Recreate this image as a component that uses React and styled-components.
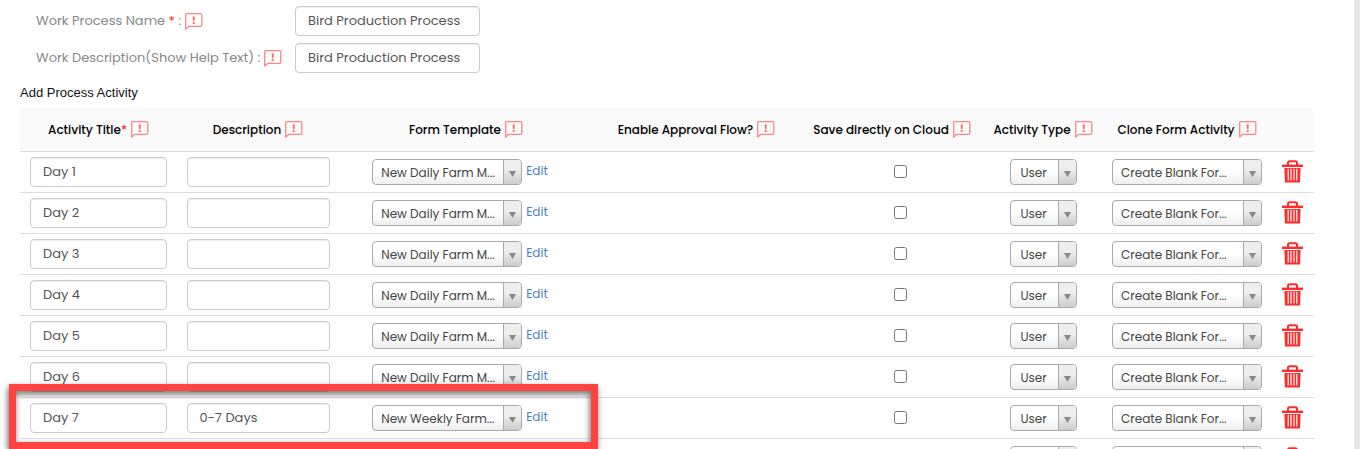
import React, { useState } from "react";
import styled, { createGlobalStyle } from "styled-components";

const columns = [
  { id: "title", label: "Activity Title", required: true, width: 157 },
  { id: "description", label: "Description", width: 162 },
  { id: "template", label: "Form Template", width: 254 },
  { id: "approval", label: "Enable Approval Flow?", width: 207 },
  { id: "cloud", label: "Save directly on Cloud", width: 184 },
  { id: "type", label: "Activity Type", width: 118 },
  { id: "clone", label: "Clone Form Activity", width: 170 },
];

const daily = "New Daily Farm M...";

const activities = [
  { title: "Day 1", description: "", template: daily },
  { title: "Day 2", description: "", template: daily },
  { title: "Day 3", description: "", template: daily },
  { title: "Day 4", description: "", template: daily },
  { title: "Day 5", description: "", template: daily },
  { title: "Day 6", description: "", template: daily },
  {
    title: "Day 7",
    description: "0-7 Days",
    template: "New Weekly Farm...",
    highlighted: true,
  },
  { title: "Day 8", description: "", template: daily },
];

function HelpIcon() {
  return (
    <HelpSvg viewBox="0 0 18 17" aria-hidden="true">
      <path
        d="M0.7 16V1.7Q0.7 0.7 1.7 0.7H15.8Q16.8 0.7 16.8 1.7V12.3Q16.8 13.3 15.8 13.3H4L0.7 16Z"
        fill="none"
        stroke="#ff8585"
        strokeWidth="1.3"
        strokeLinejoin="round"
      />
      <path d="M7.6 3.4h2.2l-0.4 4.8h-1.4z M7.7 9.2h2v1.8h-2z" fill="#ff6666" />
    </HelpSvg>
  );
}

function TrashIcon() {
  return (
    <TrashSvg viewBox="0 0 22 24" aria-hidden="true">
      <path
        d="M6 5V2.8Q6 1.2 7.6 1.2H13.4Q15 1.2 15 2.8V5"
        fill="none"
        stroke="#ff2b2b"
        strokeWidth="2"
      />
      <path d="M0 4.6h21v2.4H0z" fill="#ff2b2b" />
      <path
        fillRule="evenodd"
        d="M2.4 8H18.6L18 22.5H3z M5.6 8.8v11.6h1.2v-11.6z M8.4 8.8v11.6h1.2v-11.6z M11.4 8.8v11.6h1.2v-11.6z M14.2 8.8v11.6h1.2v-11.6z"
        fill="#ff2b2b"
      />
    </TrashSvg>
  );
}

function Dropdown({ label, value, width, indent = 8 }) {
  return (
    <SelectBox $width={width}>
      <Select aria-label={label} defaultValue={value} $indent={indent}>
        <option>{value}</option>
      </Select>
      <SelectArrow>
        <svg width="7" height="6" viewBox="0 0 7 6" aria-hidden="true">
          <path d="M0 0h7L3.5 6z" fill="#888" />
        </svg>
      </SelectArrow>
    </SelectBox>
  );
}

function ActivityRow({ activity }) {
  const [cloud, setCloud] = useState(false);

  return (
    <Row $raised={activity.highlighted}>
      <Cell>
        <TextInput aria-label="Activity Title" $width={137} defaultValue={activity.title} />
        {activity.highlighted && <Highlight />}
      </Cell>
      <Cell>
        <TextInput aria-label="Description" $width={143} defaultValue={activity.description} />
      </Cell>
      <Cell>
        <TemplateSec>
          <Dropdown label="Form Template" value={activity.template} width={150} />
          <EditLink href="#">Edit</EditLink>
        </TemplateSec>
      </Cell>
      <Cell />
      <Cell>
        <CheckboxSec>
          <Checkbox
            type="checkbox"
            aria-label="Save directly on Cloud"
            checked={cloud}
            onChange={(e) => setCloud(e.target.checked)}
          />
        </CheckboxSec>
      </Cell>
      <Cell>
        <Dropdown label="Activity Type" value="User" width={67} indent={10} />
      </Cell>
      <Cell>
        <Dropdown label="Clone Form Activity" value="Create Blank For..." width={150} />
      </Cell>
      <Cell>
        <DeleteBtn type="button" aria-label="Delete">
          <TrashIcon />
        </DeleteBtn>
      </Cell>
    </Row>
  );
}

export default function App() {
  return (
    <Page>
      <GlobalStyle />
      <Main>
        <Form>
          <Field>
            <Label htmlFor="processName">
              <span>
                Work Process Name <Required>*</Required> :
              </span>
              <HelpIcon />
            </Label>
            <TextInput id="processName" $width={185} defaultValue="Bird Production Process" />
          </Field>
          <Field>
            <Label htmlFor="processDescription">
              <span>Work Description(Show Help Text) :</span>
              <HelpIcon />
            </Label>
            <TextInput id="processDescription" $width={185} defaultValue="Bird Production Process" />
          </Field>
        </Form>
        <Heading>Add Process Activity</Heading>
        <Table>
          <colgroup>
            {columns.map((column) => (
              <Col key={column.id} $width={column.width} />
            ))}
            <Col $width={42} />
          </colgroup>
          <thead>
            <tr>
              {columns.map((column) => (
                <HeadCell key={column.id}>
                  <HeadContent>
                    <span>
                      {column.label}
                      {column.required && <Required>*</Required>}
                    </span>
                    <HelpIcon />
                  </HeadContent>
                </HeadCell>
              ))}
              <HeadCell />
            </tr>
          </thead>
          <tbody>
            {activities.map((activity) => (
              <ActivityRow key={activity.title} activity={activity} />
            ))}
          </tbody>
        </Table>
      </Main>
      <Edge />
    </Page>
  );
}

const GlobalStyle = createGlobalStyle`
  * {
    box-sizing: border-box;
  }
  body {
    margin: 0;
    background: #ffffff;
    font-family: Poppins, Inter, sans-serif;
    font-size: 13px;
    color: #555555;
  }
`;

const Page = styled.div`
  display: flex;
  height: 100vh;
  overflow: hidden;
`;
const Main = styled.main`
  flex: 1;
  min-width: 0;
  padding: 6px 40px 0 20px;
`;
const Edge = styled.div`
  width: 6px;
  background: #e6e6e8;
`;

const Form = styled.div`
  display: flex;
  flex-direction: column;
  gap: 7px;
  padding-left: 16px;
`;
const Field = styled.div`
  display: flex;
  align-items: center;
`;
const Label = styled.label`
  width: 259px;
  display: flex;
  align-items: center;
  gap: 4px;
  color: #888888;
  white-space: nowrap;
`;
const Required = styled.span`
  color: #ff2b2b;
`;
const Heading = styled.h2`
  margin: 12px 0 7px;
  font-family: "Liberation Sans", Arial, sans-serif;
  font-size: 13px;
  font-weight: 400;
  line-height: 16px;
  color: #111111;
`;

const TextInput = styled.input`
  display: block;
  width: ${(props) => props.$width}px;
  height: 30px;
  margin: 0 auto;
  padding: 0 12px;
  border: 1px solid #cccccc;
  border-radius: 4px;
  background: #ffffff;
  box-shadow: inset 0 1px 1px rgba(0, 0, 0, 0.075);
  font: inherit;
  color: #555555;

  ${Field} & {
    margin: 0;
  }
`;

const Table = styled.table`
  width: 100%;
  table-layout: fixed;
  border-collapse: separate;
  border-spacing: 0;
`;
const Col = styled.col`
  width: ${(props) => props.$width}px;
`;
const HeadCell = styled.th`
  height: 44px;
  padding: 0;
  background: #fafafa;
  border-bottom: 1px solid #dddddd;
  font-size: 12px;
  font-weight: 500;
  color: #000000;
`;
const HeadContent = styled.div`
  display: flex;
  align-items: center;
  justify-content: center;
  gap: 4px;
  white-space: nowrap;
`;
const Row = styled.tr`
  position: relative;
  z-index: ${(props) => (props.$raised ? 1 : 0)};
`;
const Cell = styled.td`
  height: 41px;
  padding: 0;
  border-bottom: 1px solid #dddddd;
  text-align: center;
`;
const Highlight = styled.div`
  position: absolute;
  top: -14px;
  left: -11px;
  width: 589px;
  height: 65px;
  border: 7px solid #ff4242;
  filter: drop-shadow(-1px 3px 3px rgba(0, 0, 0, 0.6));
  pointer-events: none;
`;

const TemplateSec = styled.div`
  display: flex;
  align-items: center;
  justify-content: center;
  gap: 4px;
  padding-right: 12px;
`;
const EditLink = styled.a`
  padding-bottom: 2px;
  font-size: 12px;
  line-height: 14px;
  color: #4a7fc0;
  text-decoration: none;
`;

const SelectBox = styled.div`
  display: flex;
  width: ${(props) => props.$width}px;
  height: 26px;
  border: 1px solid #aaaaaa;
  border-radius: 4px;
  overflow: hidden;
  background: linear-gradient(to bottom, #ffffff 50%, #eeeeee 100%);

  ${Cell} > & {
    margin: 0 auto;
  }
`;
const Select = styled.select`
  flex: 1;
  min-width: 0;
  appearance: none;
  padding: 0 0 0 ${(props) => props.$indent}px;
  border: none;
  background: transparent;
  font: inherit;
  font-size: 12px;
  color: #444444;
`;
const SelectArrow = styled.span`
  width: 18px;
  display: flex;
  align-items: center;
  justify-content: center;
  padding-top: 4px;
  border-left: 1px solid #aaaaaa;
  background: linear-gradient(to top, #cccccc 0%, #eeeeee 60%);
  pointer-events: none;
`;

const CheckboxSec = styled.div`
  display: flex;
  justify-content: center;
  padding: 0 0 2px 16px;
`;
const Checkbox = styled.input`
  width: 13px;
  height: 13px;
  margin: 0;
`;
const DeleteBtn = styled.button`
  display: block;
  margin: 0 auto;
  padding: 0;
  border: none;
  background: none;
  cursor: pointer;
`;

const HelpSvg = styled.svg`
  display: block;
  width: 18px;
  height: 17px;
  flex-shrink: 0;
`;
const TrashSvg = styled.svg`
  display: block;
  width: 22px;
  height: 24px;
`;
